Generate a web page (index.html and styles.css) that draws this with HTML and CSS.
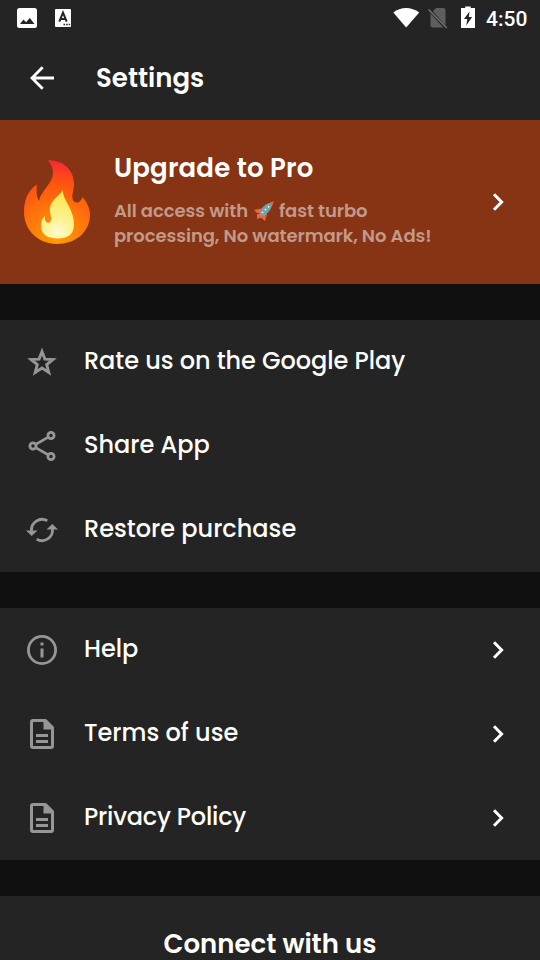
FILE: index.html
```
<!DOCTYPE html>
<html lang="en">
<head>
<meta charset="utf-8">
<title>Settings</title>
<link rel="stylesheet" href="styles.css">
</head>
<body>
<svg class="defs" width="0" height="0">
  <symbol id="chevron" viewBox="0 0 14 20"><path d="M3 2.200 10.600 10 3 17.800" fill="none" stroke="#fff" stroke-width="3"/></symbol>
  <symbol id="doc" viewBox="0 0 32 32"><path d="M7 2.500h12.500l7 7V28q0 1.500-1.500 1.500H7Q5.500 29.500 5.500 28V4Q5.500 2.500 7 2.500Z" fill="none" stroke="#969696" stroke-width="3" stroke-linejoin="round"/><path d="M17.500 2.500h3l6.500 7v2h-9.500ZM10 16h12v3H10zM10 22h12v3H10z" fill="#969696"/></symbol>
</svg>
<div class="screen">
  <header class="status">
    <svg class="notifications" width="58" height="24" viewBox="0 0 58 24">
      <rect x="0" y="2" width="20" height="20" rx="2.500" fill="#fff"/>
      <path d="M3 18 6.500 13.500 9 16.300 12.800 12 17.500 18Z" fill="#242424"/>
      <rect x="38" y="3" width="16" height="18" rx="1" fill="#fff"/>
      <path d="m42.300 15.700 3.700-9 3.700 9M43.600 13h4.800" fill="none" stroke="#242424" stroke-width="2"/>
      <path d="M46.500 18.500h1.600m1 0h1.600m1 0h1.400" stroke="#242424" stroke-width="1.500"/>
    </svg>
    <div class="signals">
      <svg width="84" height="26" viewBox="0 0 84 26">
        <path d="M.3 7.500C7.500 1.400 18.500 1.400 26.200 7.500L13.200 22.500Z" fill="#fff"/>
        <path d="m43 3h7.500q2 0 2 2v15.500L39.800 6.200ZM37.500 8.500 50.300 22.500H39.500q-2 0-2-2Z" fill="#5e5e5e"/>
        <path d="m35.500 4.500 18.300 18.500" stroke="#707070" stroke-width="1.600"/>
        <path d="M72.200 3V1.500h5.500V3H82V23H68V3Z" fill="#fff"/>
        <path d="m76.500 6.500-5.500 7.500h3.300l-1 6.500 5.800-8.500h-3.300Z" fill="#242424"/>
      </svg>
      <time class="clock">4:50</time>
    </div>
  </header>
  <nav class="toolbar">
    <svg width="24" height="24" viewBox="0 0 24 24"><path d="M24 12H2M12.700 1.200 2 12l10.700 10.800" fill="none" stroke="#fff" stroke-width="2.800"/></svg>
    <h1 class="title">Settings</h1>
  </nav>
  <section class="promo">
    <svg class="flame" width="66" height="84" viewBox="0 0 66 84">
      <defs>
        <radialGradient id="outer" gradientUnits="userSpaceOnUse" cx="33" cy="77" r="78"><stop offset="0" stop-color="#ffa000"/><stop offset=".35" stop-color="#ff7a0b"/><stop offset=".72" stop-color="#ff5010"/><stop offset="1" stop-color="#f7243a"/></radialGradient>
        <radialGradient id="inner" gradientUnits="userSpaceOnUse" cx="34" cy="72" r="44"><stop offset="0" stop-color="#fffbd0"/><stop offset=".35" stop-color="#fff18a"/><stop offset="1" stop-color="#ffe342"/></radialGradient>
        <filter id="glow" x="-20%" y="-20%" width="140%" height="140%"><feGaussianBlur stdDeviation=".7"/></filter>
      </defs>
      <path d="M24 .3C38 0 50 9 50 24C50 31 47 35 49 40C52 45 57 42 58.500 37C63 42 66 48 66 56C65 73 51 84 33 84C14 84 0 70 0 52C0 40 4 30 13 24.500C12 33 13 38 15 41C16 32 28 24 29 14C29.300 8 27 4 24 .3Z" fill="url(#outer)"/>
      <path d="M39 30C38 39 50 49 50 64C50 75 43 78.500 34 78.500C24 78.500 17 75 17 66C17 62 18 58 21 56C20 61 23 64 26 62C29 59 25 54 26 47C28 39 35 36 39 30Z" fill="url(#inner)" filter="url(#glow)"/>
    </svg>
    <div class="promo-copy">
      <h2 class="promo-title">Upgrade to Pro</h2>
      <p class="promo-text">
        <span class="line"><span>All access with</span><svg class="rocket" width="22" height="22" viewBox="0 0 22 22"><path d="M8 8.500 1 10 4 13h4ZM14 14l-2 7-3.500-3v-4ZM4 14h4l2 3-6 2Z" fill="#ef6534"/><path d="M6 14.500C8 7 13 3 19.500 2.500C19 9 15 14 8.500 17Z" fill="#72a2ab"/><path d="m16.500 3.100 4.500-2.100-1.600 4.500Z" fill="#f06535"/><path d="M9.500 12.300h.1M12.500 9.500h.1M15.500 6.800h.1" stroke="#eef6f3" stroke-width="1.700" stroke-linecap="round"/></svg><span>fast turbo</span></span>
        <span class="line">processing, No watermark, No Ads!</span>
      </p>
    </div>
    <svg class="chevron" width="14" height="20"><use href="#chevron"/></svg>
  </section>
  <section class="group">
    <div class="row"><svg class="icon" viewBox="0 0 32 32"><path d="m16 5.500 2.900 7.600 8.100.4-6.300 5.100 2.100 7.900-6.800-4.400-6.800 4.400 2.100-7.900L5 13.500l8.100-.4Z" fill="none" stroke="#969696" stroke-width="2.900"/></svg><span class="label-rate">Rate us on the Google Play</span></div>
    <div class="row"><svg class="icon" viewBox="0 0 32 32"><g fill="none" stroke="#969696" stroke-width="2.800"><circle cx="25" cy="5.500" r="3.100"/><circle cx="7" cy="16" r="3.100"/><circle cx="25" cy="26.500" r="3.100"/><path d="m9.700 14.400 12.600-7.300M9.700 17.600l12.600 7.300"/></g></svg><span>Share App</span></div>
    <div class="row"><svg class="icon" viewBox="0 0 32 32"><path d="M5.500 17A10.600 10.600 0 0 1 21.300 6.800M26.500 15A10.600 10.600 0 0 1 10.700 25.200" fill="none" stroke="#969696" stroke-width="2.800"/><path d="M0 16.500h11.500L5.700 22ZM20.500 15.500H32L26.300 10Z" fill="#969696"/></svg><span>Restore purchase</span></div>
  </section>
  <section class="group">
    <div class="row"><svg class="icon" viewBox="0 0 32 32"><circle cx="16" cy="16" r="13.600" fill="none" stroke="#969696" stroke-width="2.800"/><path d="M14.500 8.500h3v3h-3zM14.500 14.500h3v9h-3z" fill="#969696"/></svg><span>Help</span><svg class="chevron" width="14" height="20"><use href="#chevron"/></svg></div>
    <div class="row"><svg class="icon"><use href="#doc"/></svg><span>Terms of use</span><svg class="chevron" width="14" height="20"><use href="#chevron"/></svg></div>
    <div class="row"><svg class="icon"><use href="#doc"/></svg><span class="label-privacy">Privacy Policy</span><svg class="chevron" width="14" height="20"><use href="#chevron"/></svg></div>
  </section>
  <section class="connect"><h2 class="connect-title">Connect with us</h2></section>
</div>
</body>
</html>
```
FILE: styles.css
```
* { box-sizing: border-box; }
body { margin: 0; background: #101010; color: #fff; font-family: Poppins, Inter, sans-serif; }
h1, h2, p { margin: 0; }
.defs { display: none; }
.screen { height: 960px; overflow: hidden; display: flex; flex-direction: column; white-space: nowrap; }
.status { flex: none; height: 36px; padding: 0 12px 0 17px; display: flex; align-items: center; justify-content: space-between; background: #242424; }
.signals { display: flex; align-items: center; gap: 9px; height: 36px; }
.clock { width: 42px; font: 500 21px/36px Roboto, sans-serif; padding-top: 2px; }
.toolbar { flex: none; height: 84px; padding-left: 30px; display: flex; align-items: center; gap: 42px; background: #242424; }
.title, .promo-title, .connect-title { font-size: 26px; font-weight: 600; line-height: 36px; }
.promo-title { letter-spacing: .17px; }
.promo { flex: none; height: 164px; padding: 0 35px 0 24px; display: flex; align-items: center; gap: 24px; background: #863414; }
.flame { flex: none; }
.promo-copy { flex: 1; height: 104px; }
.promo-text { margin-top: 12px; font-size: 18px; font-weight: 600; line-height: 25px; letter-spacing: -.08px; color: #c3998a; }
.line { display: flex; align-items: center; height: 25px; }
.rocket { flex: none; margin: 0 4px 0 5px; }
.chevron { flex: none; margin-left: auto; }
.group { flex: none; margin-top: 36px; background: #242424; }
.row { height: 84px; padding: 0 35px 0 26px; display: flex; align-items: center; font-size: 24px; font-weight: 500; line-height: 36px; }
.row > span { margin-top: -2px; }
.label-rate { letter-spacing: -.05px; }
.label-privacy { letter-spacing: -.22px; }
.icon { flex: none; width: 32px; height: 32px; margin-right: 26px; }
.connect { flex: none; height: 64px; margin-top: 36px; padding-top: 30px; text-align: center; background: #242424; }
```
